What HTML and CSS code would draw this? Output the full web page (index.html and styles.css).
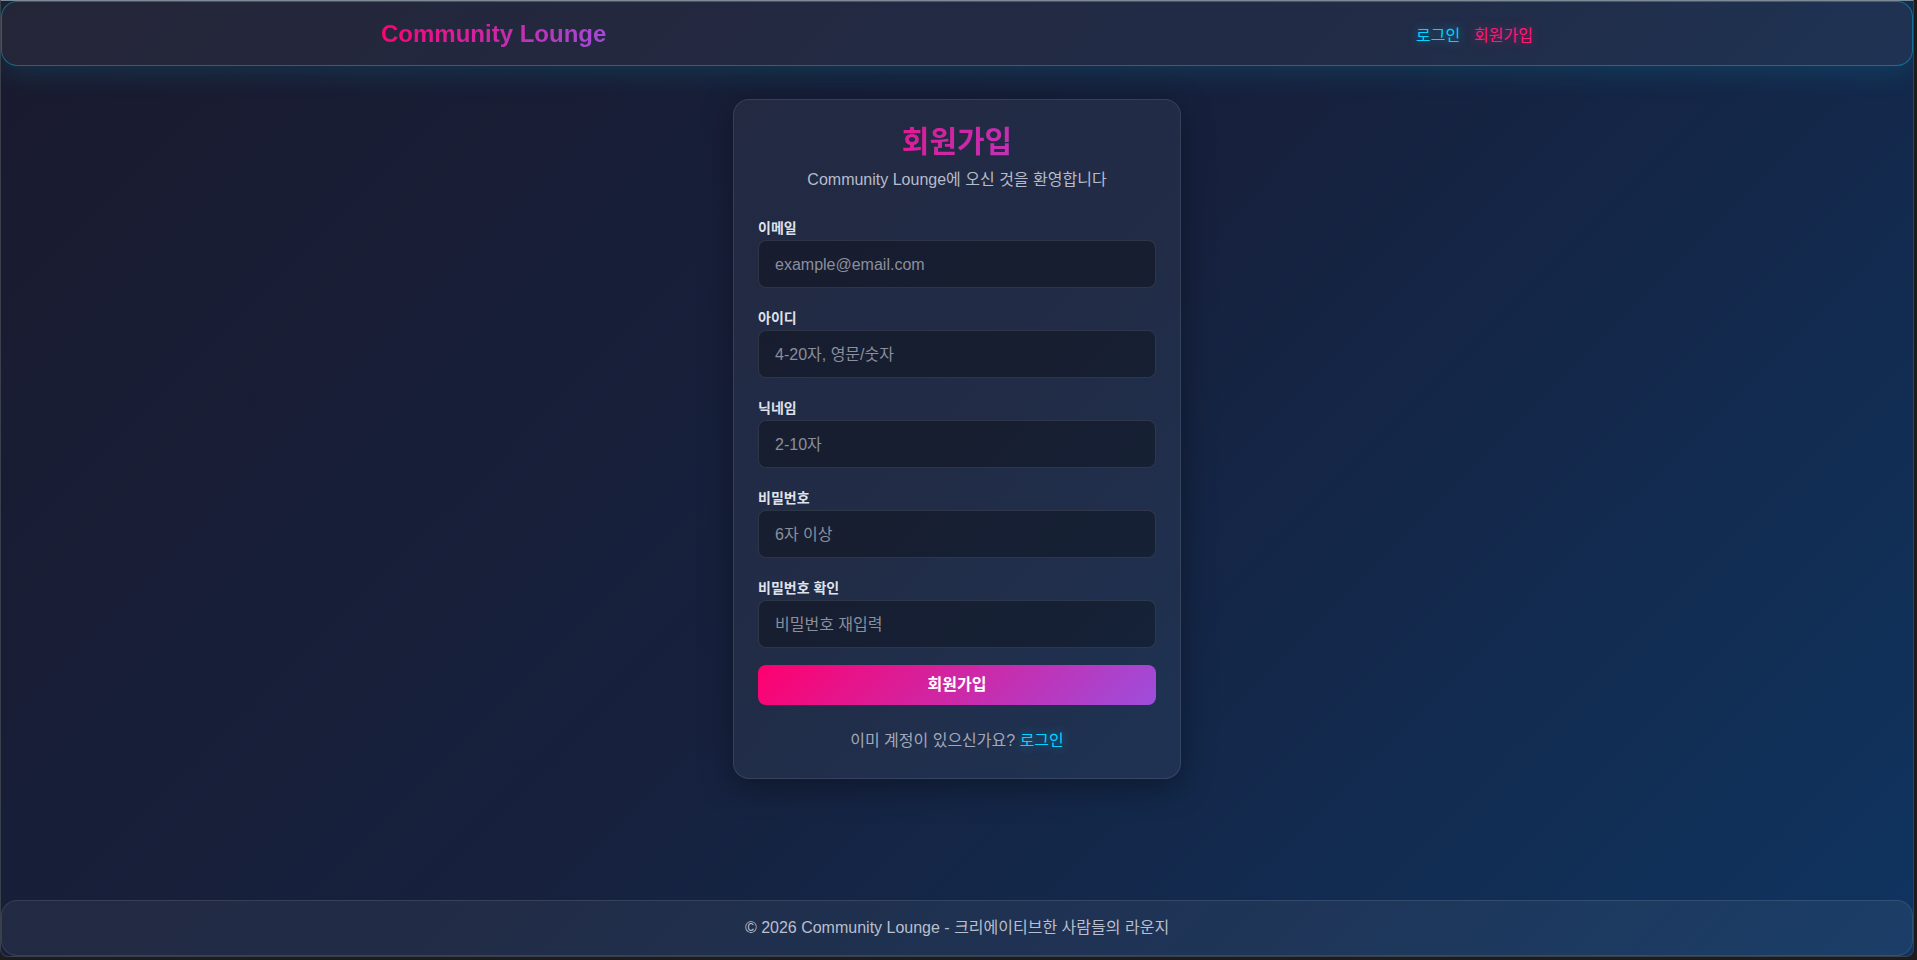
FILE: index.html
```html
<!DOCTYPE html>
<html lang="ko">
<head>
<meta charset="utf-8">
<title>회원가입 - Community Lounge</title>
<link rel="stylesheet" href="styles.css">
</head>
<body>
<div class="frame">
  <header class="site-header">
    <div class="container header-inner">
      <a class="logo" href="#">Community Lounge</a>
      <nav class="nav">
        <a class="nav-link nav-login" href="#">로그인</a>
        <a class="nav-link nav-signup" href="#">회원가입</a>
      </nav>
    </div>
  </header>
  <main class="main">
    <section class="card">
      <h1 class="card-title">회원가입</h1>
      <p class="card-subtitle">Community Lounge에 오신 것을 환영합니다</p>
      <form class="form">
        <div class="form-group">
          <label class="form-label">이메일</label>
          <input class="form-input" type="email" placeholder="example@email.com">
        </div>
        <div class="form-group">
          <label class="form-label">아이디</label>
          <input class="form-input" type="text" placeholder="4-20자, 영문/숫자">
        </div>
        <div class="form-group">
          <label class="form-label">닉네임</label>
          <input class="form-input" type="text" placeholder="2-10자">
        </div>
        <div class="form-group">
          <label class="form-label">비밀번호</label>
          <input class="form-input" type="password" placeholder="6자 이상">
        </div>
        <div class="form-group">
          <label class="form-label">비밀번호 확인</label>
          <input class="form-input" type="password" placeholder="비밀번호 재입력">
        </div>
        <button class="btn-submit" type="button">회원가입</button>
      </form>
      <p class="switch">이미 계정이 있으신가요? <a class="switch-link" href="#">로그인</a></p>
    </section>
  </main>
  <footer class="site-footer">
    <p class="footer-text">© 2026 Community Lounge - 크리에이티브한 사람들의 라운지</p>
  </footer>
</div>
</body>
</html>
```

FILE: styles.css
```css
* {
  box-sizing: border-box;
}

html {
  background: #1c1c1f;
}

body {
  margin: 0;
  padding: 0 3px 3px 0;
  font-family: "Liberation Sans", Arial, "Noto Sans CJK KR", sans-serif;
  color: #e6e8ef;
}

.frame {
  height: calc(100vh - 3px);
  display: flex;
  flex-direction: column;
  border: 1px solid #3a3f4c;
  border-top-color: #7d8a96;
  border-radius: 0 0 8px 8px;
  overflow: hidden;
  background: linear-gradient(135deg, #1a1a2e 0%, #16213e 50%, #0f3460 100%);
}

.container {
  max-width: 1200px;
  margin: 0 auto;
  padding: 0 24px;
}

/* Header */
.site-header {
  flex: none;
  padding: 15px 0;
  background: rgba(255, 255, 255, 0.05);
  border: 1px solid rgba(0, 212, 255, 0.38);
  border-radius: 16px;
  box-shadow: 0 4px 30px rgba(0, 212, 255, 0.15);
  position: relative;
  z-index: 1;
}

.header-inner {
  display: flex;
  justify-content: space-between;
  align-items: center;
  height: 33px;
}

.logo {
  display: inline-block;
  font-size: 24px;
  font-weight: 700;
  text-decoration: none;
  background: linear-gradient(135deg, #ff006e, #9d4edd);
  -webkit-background-clip: text;
  background-clip: text;
  color: transparent;
}

.nav {
  display: flex;
  gap: 14px;
  align-items: center;
}

.nav-link {
  font-size: 16px;
  font-weight: 400;
  text-decoration: none;
}

.nav-login {
  color: #00d4ff;
  text-shadow: 0 0 10px rgba(0, 212, 255, 0.5);
}

.nav-signup {
  color: #ff1a78;
  text-shadow: 0 0 10px rgba(255, 0, 110, 0.5);
}

/* Main */
.main {
  flex: 1;
  display: flex;
  justify-content: center;
  align-items: flex-start;
  padding: 33px 16px 0;
}

.card {
  width: 448px;
  padding: 24px 24px 25px;
  background: rgba(255, 255, 255, 0.05);
  border: 1px solid rgba(255, 255, 255, 0.1);
  border-radius: 16px;
  box-shadow: 0 8px 32px rgba(0, 0, 0, 0.35);
}

.card-title {
  margin: 0 0 8px;
  font-size: 30px;
  line-height: 36px;
  font-weight: 700;
  text-align: center;
  background: linear-gradient(135deg, #ff006e, #9d4edd);
  -webkit-background-clip: text;
  background-clip: text;
  color: transparent;
}

.card-subtitle {
  margin: 0 0 26px;
  font-size: 16px;
  line-height: 24px;
  text-align: center;
  color: #b6bccb;
}

.form {
  display: flex;
  flex-direction: column;
}

.form-group {
  display: flex;
  flex-direction: column;
  margin-bottom: 20px;
}

.form-group:last-of-type {
  margin-bottom: 17px;
}

.form-label {
  font-size: 14px;
  line-height: 20px;
  font-weight: 700;
  color: #dfe2ea;
  margin-bottom: 2px;
}

.form-input {
  height: 48px;
  padding: 13px 16px 11px;
  font-family: "Liberation Sans", Arial, "Noto Sans CJK KR", sans-serif;
  font-size: 16px;
  line-height: 22px;
  color: #e6e8ef;
  background: rgba(0, 0, 0, 0.3);
  border: 1px solid rgba(255, 255, 255, 0.1);
  border-radius: 8px;
  outline: none;
}

.form-input::placeholder {
  color: #8a8f9d;
}

.btn-submit {
  height: 40px;
  padding: 0;
  border: none;
  border-radius: 8px;
  background: linear-gradient(135deg, #ff006e, #9d4edd);
  color: #ffffff;
  font-family: "Liberation Sans", Arial, "Noto Sans CJK KR", sans-serif;
  font-size: 16px;
  font-weight: 700;
  line-height: 40px;
  cursor: pointer;
}

.switch {
  margin: 24px 0 0;
  font-size: 16px;
  line-height: 24px;
  text-align: center;
  color: #a3a9b8;
}

.switch-link {
  color: #00d4ff;
  text-decoration: none;
  text-shadow: 0 0 10px rgba(0, 212, 255, 0.5);
}

/* Footer */
.site-footer {
  flex: none;
  padding: 16px 0;
  background: rgba(255, 255, 255, 0.05);
  border: 1px solid rgba(255, 255, 255, 0.1);
  border-radius: 16px;
  text-align: center;
}

.footer-text {
  margin: 0;
  font-size: 16px;
  line-height: 22px;
  color: #b9bfcc;
}
```
